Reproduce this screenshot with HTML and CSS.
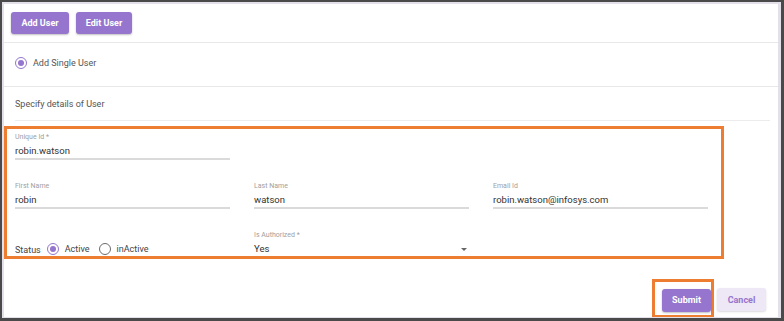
FILE: index.html
```html
<!DOCTYPE html>
<html>
<head>
<meta charset="utf-8">
<link rel="stylesheet" href="styles.css">
</head>
<body>
<div class="frame">
  <div class="page">
    <div class="toolbar">
      <button class="btn btn-primary btn-add">Add User</button>
      <button class="btn btn-primary btn-edit">Edit User</button>
    </div>
    <div class="mode">
      <span class="radio on"></span>
      <span class="mode-text">Add Single User</span>
    </div>
    <div class="details">
      <div class="details-title">Specify details of User</div>
      <div class="card-line"></div>
      <div class="form-box">
        <div class="field">
          <div class="label">Unique Id *</div>
          <div class="value">robin.watson</div>
        </div>
        <div class="field col1">
          <div class="label">First Name</div>
          <div class="value">robin</div>
        </div>
        <div class="field">
          <div class="label">Last Name</div>
          <div class="value">watson</div>
        </div>
        <div class="field">
          <div class="label">Email Id</div>
          <div class="value">robin.watson@infosys.com</div>
        </div>
        <div class="status col1">
          <span class="status-label">Status</span>
          <span class="radio on"></span>
          <span class="opt">Active</span>
          <span class="radio off"></span>
          <span class="opt">inActive</span>
        </div>
        <div class="field select">
          <div class="label">Is Authorized *</div>
          <div class="value select-value"><span>Yes</span><span class="caret"></span></div>
        </div>
      </div>
    </div>
    <div class="actions">
      <div class="submit-box">
        <button class="btn btn-primary btn-submit">Submit</button>
      </div>
      <button class="btn btn-cancel">Cancel</button>
    </div>
  </div>
</div>
</body>
</html>
```

FILE: styles.css
```css
* { box-sizing: border-box; }
html, body { margin: 0; padding: 0; background: #fff; }
body { font-family: Roboto, "Liberation Sans", sans-serif; color: #333; }

.frame {
  width: 784px;
  height: 321px;
  border-style: solid;
  border-color: #4a4a4a;
  border-width: 2px 3px 3px 2px;
  overflow: hidden;
}
.page {
  height: 100%;
  border-style: solid;
  border-color: #e3e0ea;
  border-width: 2px 3px 1px 2px;
  background: #fff;
  overflow: hidden;
}

.btn {
  font-family: Roboto, "Liberation Sans", sans-serif;
  font-size: 9px;
  font-weight: 700;
  height: 23px;
  border: none;
  border-radius: 3px;
  padding: 0;
  cursor: pointer;
}
.btn-primary {
  background: #9575cd;
  color: #fff;
  box-shadow: 0 1px 2px rgba(0,0,0,0.25);
}
.btn-cancel {
  background: #ede7f6;
  color: #9575cd;
  width: 49px;
  margin-left: 3px;
  box-shadow: 0 1px 2px rgba(0,0,0,0.15);
}

.toolbar {
  height: 39px;
  padding: 8px 0 0 7px;
  display: flex;
  gap: 7px;
  border-bottom: 1px solid #e8e8e8;
}
.btn-add { width: 58px; height: 22px; }
.btn-edit { width: 56px; height: 22px; }

.mode {
  height: 44px;
  display: flex;
  padding: 14px 0 0 11px;
  align-items: flex-start;
  gap: 6px;
  border-bottom: 1px solid #e8e8e8;
}
.mode-text { font-size: 9px; line-height: 12px; color: #555; }

.radio {
  width: 12px;
  height: 12px;
  border-radius: 50%;
  border: 1.5px solid #9575cd;
  display: inline-flex;
  align-items: center;
  justify-content: center;
  flex: none;
}
.radio.on::after {
  content: "";
  width: 6px;
  height: 6px;
  border-radius: 50%;
  background: #9575cd;
}
.radio.off { border-color: #6b6b6b; }

.details { padding-top: 10px; }
.details-title {
  font-size: 9px;
  line-height: 14px;
  color: #555;
  padding-left: 11px;
}
.card-line {
  margin: 9px 0 0 11px;
  width: 755px;
  height: 1px;
  background: #ececec;
}
.form-box {
  margin-top: 5px;
  width: 720px;
  border: 3px solid #ed7d31;
  padding: 4px 0 0 8px;
  display: grid;
  grid-template-columns: repeat(3, 215px);
  column-gap: 24px;
  row-gap: 22px;
}
.col1 { grid-column: 1; }

.field { height: 27px; border-bottom: 2px solid #dadada; }
.field.select { height: 25px; border-bottom: none; }
.label {
  font-size: 7px;
  line-height: 9px;
  color: #a0a0a0;
}
.value {
  margin-top: 2px;
  font-size: 9.5px;
  line-height: 14px;
  color: #333;
}
.select-value {
  display: flex;
  align-items: center;
  justify-content: space-between;
  padding-right: 2px;
}
.caret {
  width: 0;
  height: 0;
  border-left: 3.5px solid transparent;
  border-right: 3.5px solid transparent;
  border-top: 3.5px solid #666;
}

.status {
  margin-top: 11px;
  height: 14px;
  display: flex;
  align-items: center;
  font-size: 9px;
  color: #444;
}
.status-label { margin-right: 6px; position: relative; top: 1px; }
.status .opt { margin-left: 6px; }
.status .opt + .radio { margin-left: 9px; }

.actions {
  margin-top: 20px;
  display: flex;
  align-items: flex-start;
  padding-left: 648px;
}
.submit-box {
  border: 3px solid #ed7d31;
  padding: 6px 0 3px 7px;
}
.btn-submit { width: 49px; }
.actions > .btn-cancel { margin-top: 9px; }
```
